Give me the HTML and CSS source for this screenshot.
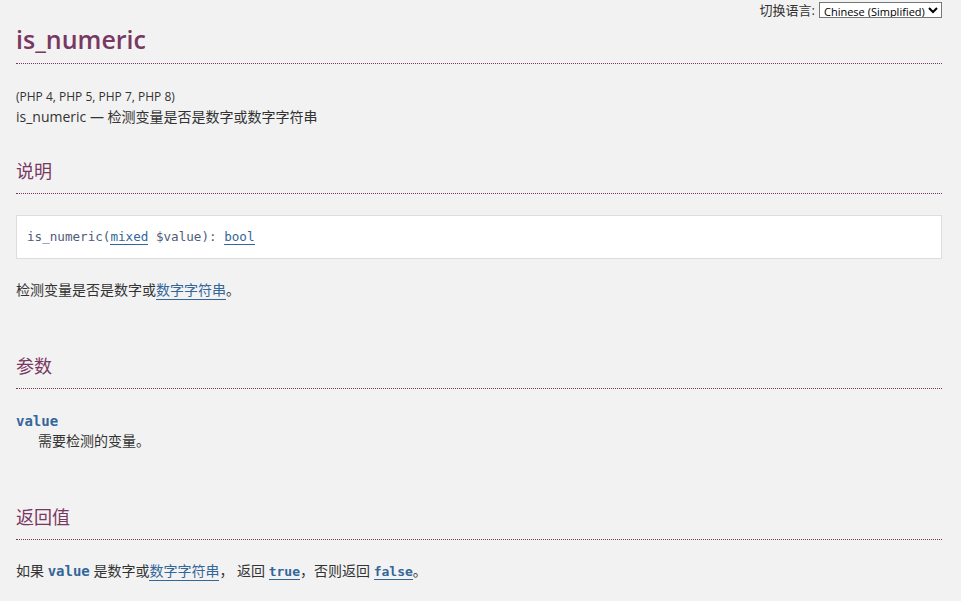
FILE: index.html
```html
<!DOCTYPE html>
<html>
<head>
    <title>PHP: is_numeric - Manual</title>
    <meta charset="UTF-8">
    <link rel="stylesheet" href="styles.css">
</head>
<body>

<div class="change-language">
    <label for="changelang">切换语言:</label>
    <select id="changelang">
        <option>Chinese (Simplified)</option>
    </select>
</div>

<main class="refentry">
    <div class="refnamediv">
        <h1 class="refname">is_numeric</h1>
        <p class="verinfo">(PHP 4, PHP 5, PHP 7, PHP 8)</p>
        <p class="refpurpose">is_numeric — 检测变量是否是数字或数字字符串</p>
    </div>

    <div class="refsect">
        <h2>说明</h2>
        <div class="methodsynopsis">
            <span class="methodname">is_numeric</span>(<a href="#" class="type">mixed</a> <span class="var">$value</span>): <a href="#" class="type">bool</a>
        </div>
        <p class="para">检测变量是否是数字或<a href="#">数字字符串</a>。</p>
    </div>

    <div class="refsect">
        <h2>参数</h2>
        <dl>
            <dt><code class="parameter">value</code></dt>
            <dd>需要检测的变量。</dd>
        </dl>
    </div>

    <div class="refsect">
        <h2>返回值</h2>
        <p class="para">如果 <code class="parameter">value</code> 是数字或<a href="#">数字字符串</a>， 返回 <a href="#" class="literal">true</a>，否则返回 <a href="#" class="literal">false</a>。</p>
    </div>
</main>

</body>
</html>
```

FILE: styles.css
```css
body {
    margin: 0;
    background: #f2f2f2;
    color: #333;
    font-family: "Open Sans", "Noto Sans CJK SC", sans-serif;
    font-size: 14px;
    line-height: 20px;
}

a {
    color: #369;
    text-decoration: none;
    border-bottom: 1px solid #369;
}

code {
    font-family: "DejaVu Sans Mono", "Noto Sans CJK SC", monospace;
}

.change-language {
    display: flex;
    justify-content: flex-end;
    align-items: center;
    gap: 4px;
    padding: 2px 19px 0 0;
    font-size: 13px;
    line-height: 16px;
}

.change-language select {
    font-family: "Open Sans", sans-serif;
    font-size: 11px;
    height: 16px;
    padding: 0;
    border: 1px solid #767676;
    background: #fff;
    color: #000;
}

.refentry {
    padding: 0 19px 0 16px;
}

h1, h2 {
    color: #793862;
    margin: 0;
    border-bottom: 1px dotted #793862;
}

.refname {
    font-size: 25px;
    line-height: 30px;
    padding: 6px 0 9px;
    font-weight: 600;
}

.verinfo {
    margin: 23px 0 0;
    font-size: 12px;
    line-height: 20px;
}

.refpurpose {
    margin: 0;
}

.refsect h2 {
    font-size: 18px;
    line-height: 24px;
    font-weight: 400;
    padding: 0 0 10px;
    margin-top: 54px;
}

.refnamediv + .refsect h2 {
    margin-top: 32px;
}

.methodsynopsis {
    margin-top: 21px;
    background: #fff;
    border: 1px solid #ddd;
    padding: 11px 10px;
    font-family: "DejaVu Sans Mono", monospace;
    font-size: 12.6px;
    line-height: 20px;
    color: #4f5b7a;
}

.methodsynopsis a {
    color: #369;
}

.para {
    margin: 21px 0 0;
}

dl {
    margin: 22px 0 0;
}

dt {
    line-height: 20px;
}

dd {
    margin: 0 0 0 22px;
    line-height: 20px;
}

.parameter {
    color: #369;
    font-weight: bold;
    font-size: 14px;
}

.literal {
    font-family: "DejaVu Sans Mono", monospace;
    font-weight: bold;
    font-size: 13px;
}
```
